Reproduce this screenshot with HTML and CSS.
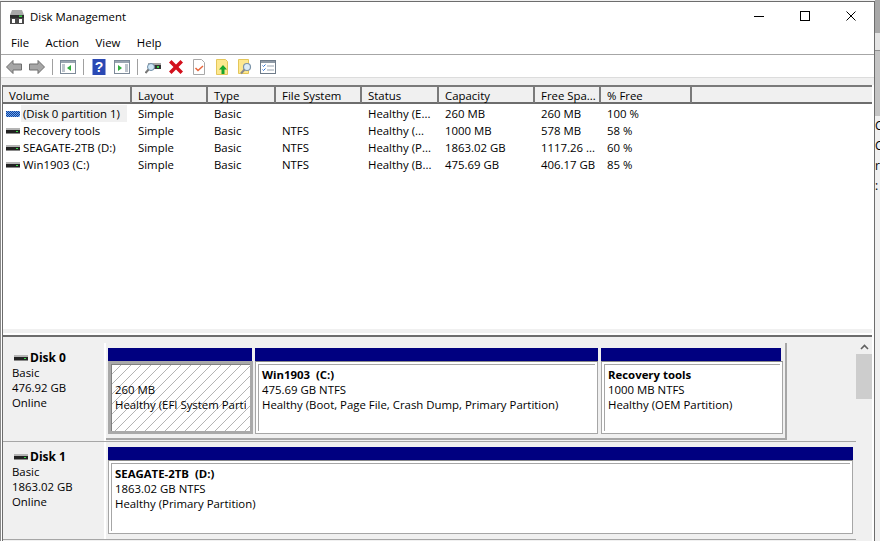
FILE: index.html
```html
<!DOCTYPE html>
<html lang="en">
<head>
    <meta charset="UTF-8">
    <title>Disk Management</title>
    <link rel="stylesheet" href="styles.css">
</head>
<body>
    <svg class="defs" width="0" height="0">
        <symbol id="hdd" viewBox="0 0 14 8">
            <rect x="0" y="1" width="14" height="2" fill="#b4b4b4"/>
            <rect x="0" y="3" width="14" height="3" fill="#222"/>
            <rect x="0" y="6" width="14" height="1" fill="#8a8a8a"/>
            <rect x="10" y="4" width="2" height="1" fill="#38e048"/>
        </symbol>
        <symbol id="hdd-raw" viewBox="0 0 14 8">
            <rect x="0" y="1" width="14" height="6" rx="1" fill="#6aa6ea"/>
            <path d="M0 1.500h14M1 2.500h13M0 3.500h14M1 4.500h13M0 5.500h14M1 6.500h12" stroke="#123f9c" stroke-dasharray="1 1"/>
        </symbol>
    </svg>

    <div class="window">
        <div class="titlebar">
            <svg class="app-icon" width="16" height="16" viewBox="0 0 16 16">
                <path d="M3 1h10l2 5H1z" fill="#a9a9a9"/>
                <rect x="1" y="6" width="14" height="3" fill="#2e2e2e"/>
                <rect x="10" y="6.500" width="3" height="1.500" fill="#38d048"/>
                <rect x="1" y="9" width="14" height="6" fill="#4a4a4a"/>
                <rect x="3" y="10" width="3" height="4" fill="#fff"/>
                <rect x="10" y="10" width="3" height="4" fill="#fff"/>
            </svg>
            <span class="title">Disk Management</span>
            <div class="controls">
                <div class="control"><svg width="10" height="10" viewBox="0 0 10 10"><path d="M0 5.500h10" stroke="#000"/></svg></div>
                <div class="control"><svg width="10" height="10" viewBox="0 0 10 10"><rect x=".5" y=".5" width="9" height="9" fill="none" stroke="#000"/></svg></div>
                <div class="control"><svg width="10" height="10" viewBox="0 0 10 10"><path d="M.5 .5l9 9M9.500 .5l-9 9" stroke="#000"/></svg></div>
            </div>
        </div>

        <div class="menubar">
            <span>File</span>
            <span>Action</span>
            <span>View</span>
            <span>Help</span>
        </div>

        <div class="toolbar">
            <svg class="tool" viewBox="0 0 16 16"><path d="M.5 8L7 1.500V5h8.500v6H7v3.500z" fill="#a6a6a6" stroke="#6e6e6e"/></svg>
            <svg class="tool" viewBox="0 0 16 16"><path d="M15.500 8L9 1.500V5H.5v6H9v3.500z" fill="#a6a6a6" stroke="#6e6e6e"/></svg>
            <div class="tool-sep"></div>
            <svg class="tool" viewBox="0 0 16 16">
                <rect x=".5" y="1.500" width="15" height="13" fill="#fff" stroke="#7d8a99"/>
                <rect x="1" y="2" width="14" height="2" fill="#9aa5b1"/>
                <path d="M2 6h3M2 8h3M2 10h3M2 12h3" stroke="#7d8a99"/>
                <path d="M11 6v6L7 9z" fill="#2fae3c"/>
            </svg>
            <div class="tool-sep"></div>
            <svg class="tool" viewBox="0 0 16 16">
                <rect x="1.500" y="0" width="13" height="16" fill="#2a49b4"/>
                <text class="help-mark" x="8" y="13">?</text>
            </svg>
            <svg class="tool" viewBox="0 0 16 16">
                <rect x=".5" y="1.500" width="15" height="13" fill="#fff" stroke="#7d8a99"/>
                <rect x="1" y="2" width="14" height="2" fill="#9aa5b1"/>
                <path d="M11 6h3M11 8h3M11 10h3M11 12h3" stroke="#7d8a99"/>
                <path d="M4 6v6l4-3z" fill="#2fae3c"/>
            </svg>
            <div class="tool-sep"></div>
            <svg class="tool" viewBox="0 0 16 16">
                <path d="M3 4h13v2H3z" fill="#a8a8a8"/>
                <path d="M3 6h13v4H3z" fill="#333"/>
                <rect x="12" y="7" width="2" height="2" fill="#38d048"/>
                <circle cx="6" cy="8" r="3.500" fill="#cfe6f5" stroke="#6e8ca6"/>
                <path d="M3.500 10.500L.5 14" stroke="#777" stroke-width="2"/>
            </svg>
            <svg class="tool" viewBox="0 0 16 16"><path d="M1 3.500L3.500 1 8 5.500 12.500 1 15 3.500 10.500 8 15 12.500 12.500 15 8 10.500 3.500 15 1 12.500 5.500 8z" fill="#d3101c"/></svg>
            <svg class="tool" viewBox="0 0 16 16">
                <path d="M2.500 .5h8l3 3v12h-11z" fill="#fff" stroke="#a8a8a8"/>
                <path d="M4.500 9l2.500 2.500L12 7" fill="none" stroke="#e8663c" stroke-width="1.500"/>
            </svg>
            <svg class="tool" viewBox="0 0 16 16">
                <path d="M2.500 .5h9l2 2v13h-11z" fill="#fde88f" stroke="#e4c65a"/>
                <path d="M9 6l4 4.500h-2.500V15h-3v-4.500H5z" fill="#18a62c"/>
            </svg>
            <svg class="tool" viewBox="0 0 16 16">
                <path d="M1.500 .5h10v14h-10z" fill="#fde88f" stroke="#e4c65a"/>
                <circle cx="10" cy="8" r="3.500" fill="#dcecf6" stroke="#7c94a8" stroke-width="1.200"/>
                <path d="M7.500 10.500L4 14.500" stroke="#8a8a8a" stroke-width="2"/>
            </svg>
            <svg class="tool" viewBox="0 0 16 16">
                <rect x=".5" y="1.500" width="15" height="13" fill="#fff" stroke="#6f7c8a"/>
                <rect x="1" y="2" width="14" height="2" fill="#8f9aa6"/>
                <path d="M2.500 6.500l1 1 2-2M2.500 10.500l1 1 2-2" fill="none" stroke="#2c6fd0"/>
                <path d="M7 7h7M7 11h7" stroke="#9aa5b1"/>
            </svg>
        </div>

        <div class="toolbar-gap"></div>

        <div class="list-pane">
            <div class="list-header">
                <div class="head-cell">Volume</div>
                <div class="head-cell">Layout</div>
                <div class="head-cell">Type</div>
                <div class="head-cell">File System</div>
                <div class="head-cell">Status</div>
                <div class="head-cell">Capacity</div>
                <div class="head-cell">Free Spa...</div>
                <div class="head-cell">% Free</div>
                <div class="head-cell"></div>
            </div>
            <div class="list-body">
                <div class="list-row">
                    <div class="cell volume"><svg class="vol-icon" width="14" height="8"><use href="#hdd-raw"/></svg><span class="vol-name selected">(Disk 0 partition 1)</span></div>
                    <div class="cell">Simple</div>
                    <div class="cell">Basic</div>
                    <div class="cell"></div>
                    <div class="cell">Healthy (E...</div>
                    <div class="cell">260 MB</div>
                    <div class="cell">260 MB</div>
                    <div class="cell">100 %</div>
                </div>
                <div class="list-row">
                    <div class="cell volume"><svg class="vol-icon" width="14" height="8"><use href="#hdd"/></svg><span class="vol-name">Recovery tools</span></div>
                    <div class="cell">Simple</div>
                    <div class="cell">Basic</div>
                    <div class="cell">NTFS</div>
                    <div class="cell">Healthy (...</div>
                    <div class="cell">1000 MB</div>
                    <div class="cell">578 MB</div>
                    <div class="cell">58 %</div>
                </div>
                <div class="list-row">
                    <div class="cell volume"><svg class="vol-icon" width="14" height="8"><use href="#hdd"/></svg><span class="vol-name">SEAGATE-2TB (D:)</span></div>
                    <div class="cell">Simple</div>
                    <div class="cell">Basic</div>
                    <div class="cell">NTFS</div>
                    <div class="cell">Healthy (P...</div>
                    <div class="cell">1863.02 GB</div>
                    <div class="cell">1117.26 ...</div>
                    <div class="cell">60 %</div>
                </div>
                <div class="list-row">
                    <div class="cell volume"><svg class="vol-icon" width="14" height="8"><use href="#hdd"/></svg><span class="vol-name">Win1903 (C:)</span></div>
                    <div class="cell">Simple</div>
                    <div class="cell">Basic</div>
                    <div class="cell">NTFS</div>
                    <div class="cell">Healthy (B...</div>
                    <div class="cell">475.69 GB</div>
                    <div class="cell">406.17 GB</div>
                    <div class="cell">85 %</div>
                </div>
            </div>
            <div class="sash"></div>
        </div>

        <div class="lower-pane">
            <div class="disks">
                <div class="disk-row disk-first">
                    <div class="disk-label">
                        <div class="disk-name"><svg width="14" height="8"><use href="#hdd"/></svg><b>Disk 0</b></div>
                        <div>Basic</div>
                        <div>476.92 GB</div>
                        <div>Online</div>
                    </div>
                    <div class="disk-frame frame-short">
                        <div class="part part-efi">
                            <div class="part-bar"></div>
                            <div class="part-body picked">
                                <div class="part-inner hatched">
                                    <div class="blank-line"></div>
                                    <div>260 MB</div>
                                    <div class="clip">Healthy (EFI System Partition)</div>
                                </div>
                            </div>
                        </div>
                        <div class="part part-win">
                            <div class="part-bar"></div>
                            <div class="part-body">
                                <div class="part-inner">
                                    <b>Win1903&nbsp; (C:)</b>
                                    <div>475.69 GB NTFS</div>
                                    <div>Healthy (Boot, Page File, Crash Dump, Primary Partition)</div>
                                </div>
                            </div>
                        </div>
                        <div class="part part-rec">
                            <div class="part-bar"></div>
                            <div class="part-body">
                                <div class="part-inner">
                                    <b>Recovery tools</b>
                                    <div>1000 MB NTFS</div>
                                    <div>Healthy (OEM Partition)</div>
                                </div>
                            </div>
                        </div>
                    </div>
                </div>
                <div class="disk-row disk-second">
                    <div class="disk-label">
                        <div class="disk-name"><svg width="14" height="8"><use href="#hdd"/></svg><b>Disk 1</b></div>
                        <div>Basic</div>
                        <div>1863.02 GB</div>
                        <div>Online</div>
                    </div>
                    <div class="disk-frame frame-long">
                        <div class="part part-full">
                            <div class="part-bar"></div>
                            <div class="part-body">
                                <div class="part-inner">
                                    <b>SEAGATE-2TB&nbsp; (D:)</b>
                                    <div>1863.02 GB NTFS</div>
                                    <div>Healthy (Primary Partition)</div>
                                </div>
                            </div>
                        </div>
                    </div>
                </div>
            </div>
            <div class="scrollbar">
                <svg class="scroll-up" width="9" height="6" viewBox="0 0 9 6"><path d="M1 5l3.500-3.500L8 5" fill="none" stroke="#606060" stroke-width="1.600"/></svg>
                <div class="scroll-thumb"></div>
            </div>
        </div>
    </div>

    <div class="behind">
        <div class="behind-top"></div>
        <div class="behind-line"></div>
        <div class="behind-mid"></div>
        <div class="behind-text">C<br>C<br>r<br>:</div>
    </div>
</body>
</html>
```

FILE: styles.css
```css
* {
    box-sizing: border-box;
}
html, body {
    margin: 0;
    height: 100%;
}
body {
    display: flex;
    overflow: hidden;
    background-color: #f0f0f0;
    font-family: "Open Sans", "Liberation Sans", sans-serif;
    font-size: 11.4px;
    line-height: 15px;
    color: #000;
}
.defs {
    position: absolute;
}
b {
    font-weight: 700;
}

.window {
    display: flex;
    flex-direction: column;
    width: 876px;
    height: 540px;
    margin-top: 1px;
    background-color: #fff;
    border-top: 1px solid #6d6d6d;
    border-left: 1px solid #8a8a8a;
    border-right: 1px solid #6d6d6d;
}

.titlebar {
    display: flex;
    align-items: center;
    height: 29px;
    padding-left: 8px;
}
.app-icon {
    margin-right: 5px;
}
.title {
    flex: 1;
}
.controls {
    display: flex;
    align-self: stretch;
}
.control {
    display: flex;
    align-items: center;
    justify-content: center;
    width: 46px;
    padding-bottom: 1px;
}

.menubar {
    display: flex;
    align-items: center;
    gap: 16.5px;
    height: 24px;
    padding-left: 10px;
    border-bottom: 1px solid #a6a6a6;
}

.toolbar {
    display: flex;
    align-items: center;
    gap: 7px;
    height: 22px;
    padding: 2px 0 0 5px;
}
.tool {
    width: 16px;
    height: 16px;
    flex: none;
}
.tool-sep {
    width: 1px;
    height: 16px;
    background-color: #a0a0a0;
}
.help-mark {
    font-family: "Liberation Sans", sans-serif;
    font-size: 14px;
    font-weight: 700;
    fill: #fff;
    text-anchor: middle;
}
.toolbar-gap {
    height: 8px;
    background-color: #f0f0f0;
    border-top: 1px solid #dcdcdc;
}

.list-pane {
    display: flex;
    flex-direction: column;
    height: 252px;
    margin-left: 1px;
    margin-right: 2px;
    border-left: 1px solid #6d6d6d;
}
.list-header, .list-row {
    display: grid;
    grid-template-columns: 129px 76px 68px 86px 77px 96px 66px 91px 1fr;
}
.list-header {
    height: 19px;
    background-color: #f0f0f0;
    border-top: 2px solid #7a7a7a;
    border-bottom: 2px solid #6d6d6d;
}
.head-cell {
    padding: 1px 0 0 6px;
    border-right: 2px solid #7a7a7a;
    white-space: nowrap;
}
.head-cell:last-child {
    border-right: none;
}
.list-body {
    flex: 1;
    padding-top: 1px;
}
.list-row {
    height: 17px;
    line-height: 17px;
}
.cell {
    padding-left: 6px;
    white-space: nowrap;
    overflow: hidden;
}
.volume {
    display: flex;
    align-items: center;
    padding-left: 3px;
    overflow: visible;
}
.vol-icon {
    flex: none;
    margin-right: 3px;
}
.vol-name {
    padding-right: 7px;
}
.selected {
    background-color: #f0f0f0;
    padding-left: 2px;
    margin-left: -2px;
}
.sash {
    height: 8px;
    border-top: 4px solid #f0f0f0;
    border-bottom: 2px solid #6d6d6d;
}

.lower-pane {
    flex: 1;
    display: flex;
    min-height: 0;
    margin-left: 1px;
    margin-right: 2px;
    background-color: #f0f0f0;
    border-left: 1px solid #6d6d6d;
}
.disks {
    flex: 1;
    padding-top: 6px;
}
.disk-row {
    display: flex;
    border-bottom: 1px solid #a6a6a6;
}
.disk-first {
    height: 99px;
}
.disk-second {
    height: 98px;
}
.disk-label {
    width: 103px;
    padding: 7px 0 0 9px;
    border-right: 2px solid #fff;
}
.disk-name {
    display: flex;
    align-items: center;
    gap: 2px;
    height: 15px;
    margin-left: 2px;
}
.disk-name b {
    font-size: 12px;
}
.disk-frame {
    display: flex;
    gap: 2px;
    padding: 5px 0 4px 2px;
    border-right: 2px solid #a6a6a6;
}
.frame-short {
    width: 681px;
    margin-bottom: 1px;
    border-bottom: 2px solid #a6a6a6;
}
.frame-long {
    width: 750px;
    padding-bottom: 5px;
    border-right: none;
}
.part {
    display: flex;
    flex-direction: column;
}
.part-efi {
    width: 145px;
}
.part-efi .part-bar {
    margin-right: 1px;
}
.part-win {
    width: 343px;
}
.part-rec {
    width: 182px;
    margin-left: 1px;
}
.part-rec .part-bar {
    margin-right: 2px;
}
.part-full {
    width: 745px;
}
.part-bar {
    height: 13px;
    background-color: #000080;
}
.part-body {
    flex: 1;
    padding: 2px;
    background-color: #fff;
    border: 1px solid #a6a6a6;
    border-top: 1px solid #8a8a8a;
}
.part-inner {
    height: 100%;
    padding: 2px 0 0 3px;
    border-top: 1px solid #a6a6a6;
    border-left: 1px solid #a6a6a6;
    white-space: nowrap;
    overflow: hidden;
}
.picked {
    padding: 0;
    border: 3px solid #a9a9a9;
}
.hatched {
    border-color: #808080;
    background-image: repeating-linear-gradient(135deg, #fff 0 6.1px, #b4b4b4 6.1px 7.07px);
}
.blank-line {
    height: 15px;
}
.clip {
    width: 131px;
    overflow: hidden;
}

.scrollbar {
    display: flex;
    flex-direction: column;
    align-items: center;
    width: 16px;
    padding-top: 7px;
}
.scroll-thumb {
    width: 100%;
    height: 45px;
    margin-top: 4px;
    background-color: #cdcdcd;
}

.behind {
    flex: 1;
    display: flex;
    flex-direction: column;
}
.behind-top {
    height: 33px;
    background-color: #a8a8a8;
}
.behind-line {
    height: 18px;
    background-color: #e4e4e4;
    border-bottom: 1px solid #8f8f8f;
}
.behind-mid {
    height: 65px;
    background-color: #c4c4c4;
}
.behind-text {
    overflow: hidden;
    font-size: 12px;
    line-height: 20px;
}
```
